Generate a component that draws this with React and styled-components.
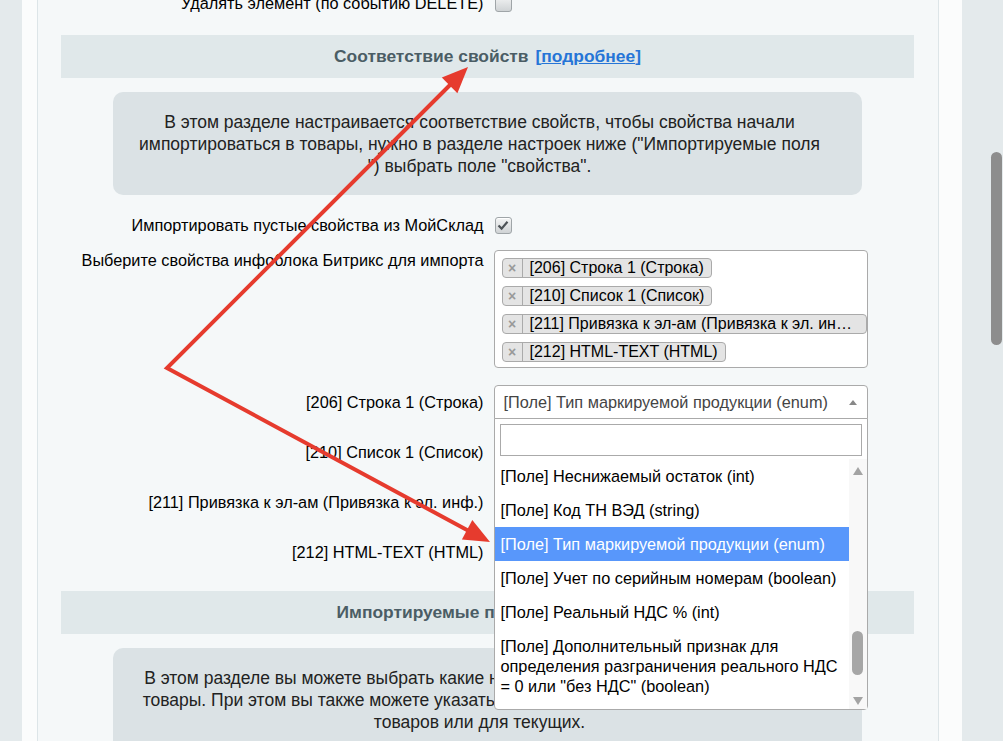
import React from 'react'
import styled, { createGlobalStyle } from 'styled-components'

const GlobalStyle = createGlobalStyle`
  html, body {
    margin: 0;
    padding: 0;
    height: 100%;
    overflow: hidden;
  }
  body {
    font-family: "Liberation Sans", Arial, sans-serif;
    font-size: 16.3px;
    color: #000;
    background: #e4eaec;
  }
  * { box-sizing: border-box; }
`

const Page = styled.div`
  position: relative;
  display: flex;
  height: 741px;
  overflow: hidden;
  padding-left: 22px;
  background: #e4eaec;
`

const Frame = styled.div`
  display: flex;
  width: 940px;
  padding: 0 23px 0 15px;
  background: #fbfcfc;
`

const Panel = styled.div`
  flex: 1;
  background: #f5f8f9;
  border-left: 1px solid #dde5e8;
  border-right: 1px solid #dde5e8;
  padding: 0 24px 0 23px;
`

const Content = styled.div`
  margin-top: -10px;
`

const Gutter = styled.div`
  flex: 1;
  display: flex;
  justify-content: flex-end;
  padding: 152px 1px 0 0;
`

const ScrollThumb = styled.div`
  width: 11px;
  height: 193px;
  border-radius: 6px;
  background: #8d8d8d;
`

const Row = styled.div`
  display: grid;
  grid-template-columns: 1fr 1fr;
  align-items: ${p => (p.$top ? 'start' : 'center')};
  height: ${p => (p.$h ? `${p.$h}px` : 'auto')};
  padding: ${p => p.$pad || '0'};
  margin-top: ${p => p.$mt || 0}px;
`

const Label = styled.div`
  text-align: right;
  padding-right: 4px;
  line-height: 20px;
  white-space: nowrap;
`

const Control = styled.div`
  position: relative;
  padding-left: 6px;
`

const Checkbox = styled.span`
  display: flex;
  align-items: center;
  justify-content: center;
  width: 17px;
  height: 17px;
  margin-left: 1px;
  border: 1px solid #9fa5a8;
  border-radius: 3px;
  background: linear-gradient(#f4f5f5, #cfd3d5);
  box-shadow: inset 0 1px 0 #fff;
`

const SectionHead = styled.div`
  display: flex;
  align-items: center;
  justify-content: center;
  gap: 7px;
  height: 43px;
  margin-top: ${p => p.$mt || 0}px;
  background: #e0e8ea;
  font-weight: bold;
  font-size: 17.4px;
  color: #4b5d65;
`

const More = styled.span`
  color: #2675d7;
  a {
    color: #2675d7;
    text-decoration: underline;
  }
`

const InfoBox = styled.div`
  width: 749px;
  margin: 14px auto 0;
  padding: 19px 26px 18px 10px;
  border-radius: 10px;
  background: #dbe2e5;
  color: #222;
  text-align: center;
  font-size: 17.5px;
  line-height: 22px;
  white-space: nowrap;
`

const Multi = styled.ul`
  display: flex;
  flex-direction: column;
  align-items: flex-start;
  gap: 8px;
  width: 374px;
  margin: 0;
  padding: 7px 0 5px 7px;
  list-style: none;
  background: #fff;
  border: 1px solid #aaa;
  border-radius: 4px;
`

const Tag = styled.li`
  display: flex;
  max-width: 100%;
  height: 20px;
  border: 1px solid #aaa;
  border-radius: 4px;
  background: #e4e4e4;
  font-size: 16px;
  line-height: 18px;
`

const TagRemove = styled.span`
  display: flex;
  align-items: center;
  justify-content: center;
  flex: none;
  width: 20px;
  border-right: 1px solid #aaa;
  color: #999;
  font-weight: bold;
  font-size: 14px;
`

const TagText = styled.span`
  padding: 0 7px 0 7px;
  white-space: nowrap;
  overflow: hidden;
  text-overflow: ellipsis;
`

const Select = styled.div`
  display: flex;
  align-items: center;
  justify-content: space-between;
  width: 374px;
  height: 34px;
  padding: 0 10px 0 9px;
  background: #fff;
  border: 1px solid #aaa;
  border-radius: ${p => (p.$open ? '4px 4px 0 0' : '4px')};
  color: #444;
  white-space: nowrap;
`

const Caret = styled.span`
  width: 0;
  height: 0;
  border-style: solid;
  border-width: ${p => (p.$up ? '0 4px 5px 4px' : '5px 4px 0 4px')};
  border-color: ${p => (p.$up ? 'transparent transparent #888 transparent' : '#888 transparent transparent transparent')};
`

const Dropdown = styled.div`
  position: absolute;
  top: 33px;
  left: 6px;
  z-index: 10;
  width: 374px;
  background: #fff;
  border: 1px solid #aaa;
  border-radius: 0 0 4px 4px;
`

const SearchWrap = styled.div`
  padding: 5px 5px 3px;
`

const Search = styled.div`
  height: 32px;
  border: 1px solid #aaa;
  background: #fff;
`

const ListArea = styled.div`
  display: flex;
  height: 250px;
`

const Options = styled.ul`
  flex: 1;
  margin: 0;
  padding: 0;
  list-style: none;
  overflow: hidden;
`

const Option = styled.li`
  padding: 7px 6px;
  line-height: 20px;
  background: ${p => (p.$active ? '#5897fb' : 'transparent')};
  color: ${p => (p.$active ? '#fff' : '#000')};
`

const ListBar = styled.div`
  display: flex;
  flex-direction: column;
  align-items: center;
  width: 18px;
  padding: 8px 0 4px;
  background: #f8f8f8;
`

const BarArrow = styled.span`
  width: 0;
  height: 0;
  border-style: solid;
  border-width: ${p => (p.$up ? '0 5px 8px 5px' : '8px 5px 0 5px')};
  border-color: ${p => (p.$up ? 'transparent transparent #a3a3a3 transparent' : '#a3a3a3 transparent transparent transparent')};
`

const BarSpace = styled.div`
  flex: 1;
  display: flex;
  flex-direction: column;
  justify-content: flex-end;
  padding-bottom: 22px;
`

const BarThumb = styled.div`
  width: 11px;
  height: 44px;
  border-radius: 6px;
  background: #a6a6a6;
`

const Overlay = styled.svg`
  position: absolute;
  top: 0;
  left: 0;
  z-index: 20;
  pointer-events: none;
`

const tags = [
  '[206] Строка 1 (Строка)',
  '[210] Список 1 (Список)',
  '[211] Привязка к эл-ам (Привязка к эл. инфоблока)',
  '[212] HTML-TEXT (HTML)',
]

const options = [
  '[Поле] Неснижаемый остаток (int)',
  '[Поле] Код ТН ВЭД (string)',
  '[Поле] Тип маркируемой продукции (enum)',
  '[Поле] Учет по серийным номерам (boolean)',
  '[Поле] Реальный НДС % (int)',
  '[Поле] Дополнительный признак для определения разграничения реального НДС = 0 или "без НДС" (boolean)',
  '[Поле] Вес (float)',
]

const Check = () => (
  <svg width="12" height="11" viewBox="0 0 12 11">
    <path d="M1.5 5.5 L4.6 8.6 L10.5 1.8" fill="none" stroke="#4d5357" strokeWidth="2.2" />
  </svg>
)

const App = () => (
  <>
    <GlobalStyle />
    <Page>
      <Frame>
        <Panel>
          <Content>
            <Row $h={26}>
              <Label>Удалять элемент (по событию DELETE)</Label>
              <Control><Checkbox /></Control>
            </Row>

            <SectionHead $mt={19}>
              Соответствие свойств
              <More>[<a>подробнее</a>]</More>
            </SectionHead>

            <InfoBox>
              В этом разделе настраивается соответствие свойств, чтобы свойства начали<br />
              импортироваться в товары, нужно в разделе настроек ниже ("Импортируемые поля<br />
              ") выбрать поле "свойства".
            </InfoBox>

            <Row $h={26} $mt={17}>
              <Label>Импортировать пустые свойства из МойСклад</Label>
              <Control><Checkbox><Check /></Checkbox></Control>
            </Row>

            <Row $top $pad="12px 0 9px">
              <Label>Выберите свойства инфоблока Битрикс для импорта</Label>
              <Control>
                <Multi>
                  {tags.map(t => (
                    <Tag key={t}>
                      <TagRemove>×</TagRemove>
                      <TagText>{t}</TagText>
                    </Tag>
                  ))}
                </Multi>
              </Control>
            </Row>

            <Row $h={50}>
              <Label>[206] Строка 1 (Строка)</Label>
              <Control>
                <Select $open>
                  [Поле] Тип маркируемой продукции (enum)
                  <Caret $up />
                </Select>
                <Dropdown>
                  <SearchWrap><Search /></SearchWrap>
                  <ListArea>
                    <Options>
                      {options.map((o, i) => (
                        <Option key={o} $active={i === 2}>{o}</Option>
                      ))}
                    </Options>
                    <ListBar>
                      <BarArrow $up />
                      <BarSpace><BarThumb /></BarSpace>
                      <BarArrow />
                    </ListBar>
                  </ListArea>
                </Dropdown>
              </Control>
            </Row>

            <Row $h={50}>
              <Label>[210] Список 1 (Список)</Label>
              <Control>
                <Select>[Поле] Страна производства (string)<Caret /></Select>
              </Control>
            </Row>

            <Row $h={50}>
              <Label>[211] Привязка к эл-ам (Привязка к эл. инф.)</Label>
              <Control>
                <Select>[Поле] Код ТН ВЭД (string)<Caret /></Select>
              </Control>
            </Row>

            <Row $h={50}>
              <Label>[212] HTML-TEXT (HTML)</Label>
              <Control>
                <Select>[Поле] Описание (string)<Caret /></Select>
              </Control>
            </Row>

            <SectionHead $mt={14}>
              Импортируемые поля
              <More>[<a>подробнее</a>]</More>
            </SectionHead>

            <InfoBox>
              В этом разделе вы можете выбрать какие наименования данных импортировать в<br />
              товары. При этом вы также можете указать, обновлять ли эти данные и для новых<br />
              товаров или для текущих.
            </InfoBox>
          </Content>
        </Panel>
      </Frame>
      <Gutter>
        <ScrollThumb />
      </Gutter>

      <Overlay width="1003" height="741" viewBox="0 0 1003 741">
        <g stroke="#e63b2e" strokeWidth="4" strokeLinecap="round" fill="none">
          <path d="M450 85 L167 368 L467 530" strokeLinejoin="miter" />
        </g>
        <g fill="#e63b2e">
          <polygon points="468,67 457.4,93.2 441.8,77.6" />
          <polygon points="490,542 461.9,539.4 472.3,520" />
        </g>
      </Overlay>
    </Page>
  </>
)

export default App
